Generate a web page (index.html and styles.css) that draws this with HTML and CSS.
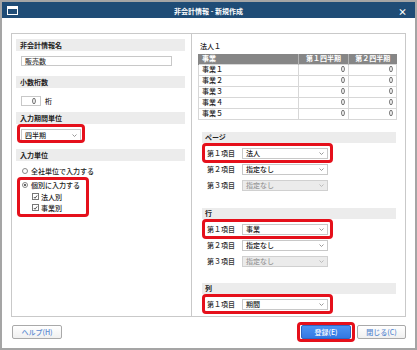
FILE: index.html
```html
<!DOCTYPE html>
<html lang="ja">
<head>
<meta charset="utf-8">
<title>非会計情報 - 新規作成</title>
<link rel="stylesheet" href="styles.css">
</head>
<body>
<div class="window">
  <div class="titlebar">
    <div class="tb-left">
      <svg class="app-icon" width="11" height="9" viewBox="0 0 11 9"><rect x="0.5" y="0.5" width="10" height="8" fill="none" stroke="#fff"/><rect x="0.5" y="0.5" width="10" height="2.5" fill="#fff"/></svg>
    </div>
    <div class="title">非会計情報 - 新規作成</div>
    <div class="tb-right"><span class="close">×</span></div>
  </div>
  <div class="content">
    <div class="box">
      <div class="pane-left">
        <div class="sec-head">非会計情報名</div>
        <div class="field f-name"><div class="input name">販売数</div></div>
        <div class="sec-head">小数桁数</div>
        <div class="field f-digits"><div class="input num"><span class="n">0</span></div><span class="unit">桁</span></div>
        <div class="sec-head">入力期間単位</div>
        <div class="field f-period"><div class="select period hl hl-period">四半期<svg class="caret" width="5" height="3" viewBox="0 0 5 3"><polyline points="0.5,0.5 2.5,2.5 4.5,0.5" fill="none" stroke="#999"/></svg></div></div>
        <div class="sec-head">入力単位</div>
        <div class="options">
          <div class="opt"><span class="radio"></span>全社単位で入力する</div>
          <div class="opt-group hl hl-group">
            <div class="opt"><span class="radio on"></span>個別に入力する</div>
            <div class="opt sub"><span class="check"><svg width="6" height="6" viewBox="0 0 6 6"><polyline points="1,3 2.4,4.5 5,1.2" fill="none" stroke="#333" stroke-width="1"/></svg></span>法人別</div>
            <div class="opt sub"><span class="check"><svg width="6" height="6" viewBox="0 0 6 6"><polyline points="1,3 2.4,4.5 5,1.2" fill="none" stroke="#333" stroke-width="1"/></svg></span>事業別</div>
          </div>
        </div>
      </div>
      <div class="pane-right">
        <div class="corp">法人１</div>
        <table class="grid">
          <thead>
            <tr><th class="c1">事業</th><th class="c2">第１四半期</th><th class="c3">第２四半期</th></tr>
          </thead>
          <tbody>
            <tr><td class="c1">事業１</td><td><span class="n">0</span></td><td><span class="n">0</span></td></tr>
            <tr><td class="c1">事業２</td><td><span class="n">0</span></td><td><span class="n">0</span></td></tr>
            <tr><td class="c1">事業３</td><td><span class="n">0</span></td><td><span class="n">0</span></td></tr>
            <tr><td class="c1">事業４</td><td><span class="n">0</span></td><td><span class="n">0</span></td></tr>
            <tr><td class="c1">事業５</td><td><span class="n">0</span></td><td><span class="n">0</span></td></tr>
          </tbody>
        </table>

        <div class="sec-head r s-page">ページ</div>
        <div class="rows">
          <div class="row hl hl-row"><span class="lbl">第１項目</span><div class="select item">法人<svg class="caret" width="5" height="3" viewBox="0 0 5 3"><polyline points="0.5,0.5 2.5,2.5 4.5,0.5" fill="none" stroke="#999"/></svg></div></div>
          <div class="row"><span class="lbl">第２項目</span><div class="select item">指定なし<svg class="caret" width="5" height="3" viewBox="0 0 5 3"><polyline points="0.5,0.5 2.5,2.5 4.5,0.5" fill="none" stroke="#999"/></svg></div></div>
          <div class="row"><span class="lbl">第３項目</span><div class="select item disabled">指定なし<svg class="caret" width="5" height="3" viewBox="0 0 5 3"><polyline points="0.5,0.5 2.5,2.5 4.5,0.5" fill="none" stroke="#bbb"/></svg></div></div>
        </div>

        <div class="sec-head r s-row">行</div>
        <div class="rows">
          <div class="row hl hl-row"><span class="lbl">第１項目</span><div class="select item">事業<svg class="caret" width="5" height="3" viewBox="0 0 5 3"><polyline points="0.5,0.5 2.5,2.5 4.5,0.5" fill="none" stroke="#999"/></svg></div></div>
          <div class="row"><span class="lbl">第２項目</span><div class="select item">指定なし<svg class="caret" width="5" height="3" viewBox="0 0 5 3"><polyline points="0.5,0.5 2.5,2.5 4.5,0.5" fill="none" stroke="#999"/></svg></div></div>
          <div class="row"><span class="lbl">第３項目</span><div class="select item disabled">指定なし<svg class="caret" width="5" height="3" viewBox="0 0 5 3"><polyline points="0.5,0.5 2.5,2.5 4.5,0.5" fill="none" stroke="#bbb"/></svg></div></div>
        </div>

        <div class="sec-head r s-col">列</div>
        <div class="rows">
          <div class="row hl hl-row"><span class="lbl">第１項目</span><div class="select item">期間<svg class="caret" width="5" height="3" viewBox="0 0 5 3"><polyline points="0.5,0.5 2.5,2.5 4.5,0.5" fill="none" stroke="#999"/></svg></div></div>
        </div>
      </div>
    </div>
    <div class="footer">
      <button class="btn">ヘルプ(H)</button>
      <div class="btn-group">
        <button class="btn primary hl hl-btn">登録(E)</button>
        <button class="btn">閉じる(C)</button>
      </div>
    </div>
  </div>
</div>
</body>
</html>
```

FILE: styles.css
```css
* { box-sizing: border-box; margin: 0; padding: 0; }
html, body { width: 417px; height: 350px; overflow: hidden; }
body {
  font-family: "Noto Sans CJK JP", "Noto Sans", sans-serif;
  font-size: 7px;
  font-weight: 500;
  color: #222;
  background: #fff;
}

.window {
  width: 417px;
  height: 350px;
  border: 2px solid #a5a5a5;
  background: #fff;
  display: flex;
  flex-direction: column;
}

.titlebar {
  height: 16px;
  background: #1f4c76;
  color: #fff;
  display: grid;
  grid-template-columns: 1fr auto 1fr;
  align-items: center;
}
.tb-left { padding-left: 5px; display: flex; align-items: center; }
.title { font-weight: bold; font-size: 7px; line-height: 16px; padding-top: 1px; }
.tb-right { display: flex; justify-content: flex-end; padding-right: 8px; }
.close { font-size: 9px; font-weight: bold; line-height: 9px; padding-top: 2px; }

.content {
  flex: 1;
  padding: 15px 9px 0 9px;
  display: flex;
  flex-direction: column;
}

.box {
  height: 284px;
  border: 1px solid #c9c9c9;
  display: flex;
}

.pane-left {
  width: 180px;
  border-right: 1px solid #c9c9c9;
  padding: 5px 6px 0 4px;
}
.pane-right {
  flex: 1;
  padding: 7px 8px 0 6px;
  overflow: hidden;
}

.sec-head {
  height: 12px;
  line-height: 12px;
  background: #ececec;
  font-weight: bold;
  padding-left: 4px;
  color: #222;
}
.sec-head.r {
  height: 11px;
  line-height: 11px;
  margin-left: 4px;
  margin-right: 1px;
  padding-left: 3px;
}

.field { display: flex; align-items: center; padding-left: 5px; }
.f-name { margin: 5px 0 10px; }
.f-digits { margin: 8px 0 6px; }
.f-period { margin: 5px 0 8px; }

.n {
  display: inline-block;
  font-family: "Noto Sans CJK JP", "Noto Sans", sans-serif;
  font-weight: 500;
  color: #444;
  will-change: transform;
}

.input {
  height: 10px;
  line-height: 9px;
  border: 1px solid #c8c8c8;
  background: #fff;
  color: #333;
  padding-left: 3px;
}
.input.name { width: 151px; }
.input.num { width: 20px; text-align: right; padding-right: 4px; }
.unit { margin-left: 4px; }

.select {
  height: 11px;
  line-height: 9px;
  border: 1px solid #c8c8c8;
  background: #fff;
  color: #222;
  padding-left: 3px;
  padding-right: 3px;
  display: flex;
  align-items: center;
  justify-content: space-between;
}
.select.period { width: 60px; height: 12px; }
.select.item { width: 86px; }
.select.disabled { background: #ebebeb; color: #9a9a9a; border-color: #d0d0d0; }
.caret { flex: none; }

.options { margin-top: 4px; padding-left: 6px; }
.opt {
  height: 12px;
  display: flex;
  align-items: center;
}
.opt + .opt-group { margin-top: 2px; }
.opt.sub { height: 11px; padding-left: 10px; }
.opt-group .opt.sub:first-of-type { margin-top: 1px; }
.opt-group { width: 67px; }
.radio {
  width: 6px; height: 6px;
  border: 1px solid #888;
  border-radius: 50%;
  margin-right: 3px;
  background: #fff;
  position: relative;
}
.radio.on::before {
  content: "";
  position: absolute;
  left: 1px; top: 1px;
  width: 2px; height: 2px;
  border-radius: 50%;
  background: #333;
}
.check {
  width: 7px; height: 7px;
  border: 1px solid #777;
  margin-right: 2px;
  display: flex;
  align-items: center;
  justify-content: center;
  background: #fff;
}
.check svg { display: block; }

.corp { height: 10px; line-height: 10px; padding-left: 2px; }

.grid {
  margin-top: 3px;
  width: 199px;
  border-collapse: collapse;
  table-layout: fixed;
  color: #333;
}
.grid th {
  height: 10px;
  background: #868686;
  color: #fff;
  font-weight: bold;
  font-size: 7px;
  line-height: 9px;
  padding: 0 3px;
  border-left: 1px solid #b5b5b5;
  text-align: center;
}
.grid th.c1 { text-align: left; border-left: 1px solid #868686; width: 100px; }
.grid th.c2 { width: 50px; }
.grid td {
  height: 11px;
  line-height: 9px;
  border: 1px solid #d7d7d7;
  padding: 0 3px;
  text-align: right;
  color: #333;
}
.grid td.c1 { text-align: left; color: #222; }

.s-page { margin-top: 12px; }
.s-row { margin-top: 17px; }
.s-col { margin-top: 16px; }

.rows { margin-top: 5px; margin-left: 4px; display: flex; flex-direction: column; gap: 5px; }
.row { display: flex; align-items: center; height: 11px; width: max-content; padding-left: 5px; }
.lbl { width: 35px; color: #333; }

.hl { position: relative; }
.hl::after {
  content: "";
  position: absolute;
  border: 3px solid #e5101b;
  border-radius: 4px;
  pointer-events: none;
}
.hl-period::after { top: -6px; bottom: -3px; left: -5px; right: -5px; }
.hl-group::after { top: -2px; bottom: -4px; left: -5px; right: 0; }
.hl-row::after { top: -5px; bottom: -4px; left: 0; right: -5px; }
.hl-btn::after { top: -4px; bottom: -4px; left: -5px; right: -5px; }

.footer {
  margin-top: 8px;
  display: flex;
  justify-content: space-between;
  padding-left: 1px;
}
.btn-group { display: flex; gap: 6px; }
.btn {
  width: 50px;
  height: 14px;
  font-family: "Noto Sans CJK JP", "Noto Sans", sans-serif;
  font-size: 7px;
  font-weight: 500;
  line-height: 12px;
  color: #5a8ad0;
  background: linear-gradient(#ffffff, #f0f0f0);
  border: 1px solid #a9a9a9;
  border-radius: 2px;
  text-align: center;
}
.btn-group .btn:last-child { width: 49px; }
.btn.primary {
  color: #fff;
  background: linear-gradient(#4b93f3, #3378e2);
  border-color: #2c66c4;
}
```
